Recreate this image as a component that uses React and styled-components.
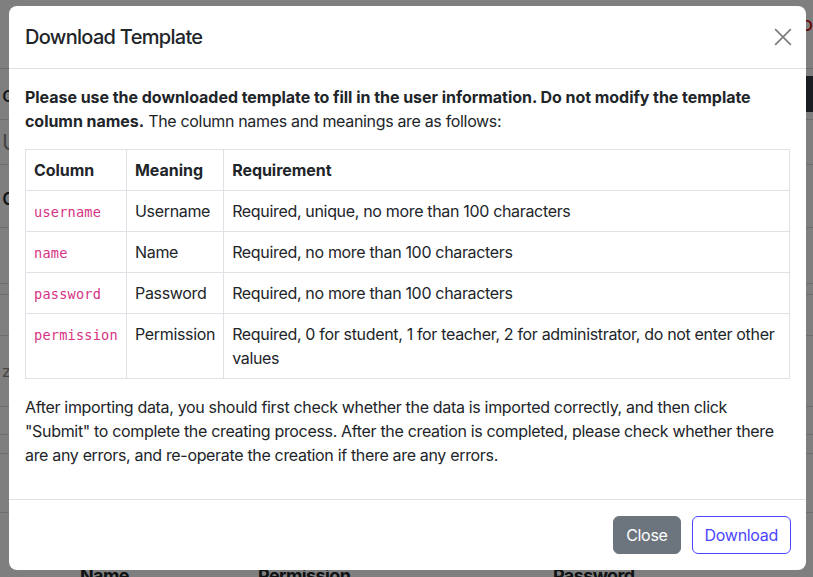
import React from "react";
import styled, { createGlobalStyle } from "styled-components";

const GlobalStyle = createGlobalStyle`
  html, body {
    margin: 0;
    padding: 0;
    height: 100%;
    overflow: hidden;
  }
  body {
    font-family: Inter, "Noto Sans", "Liberation Sans", sans-serif;
    color: #212529;
    background: #fff;
  }
`;

const Page = styled.div`
  position: relative;
  width: 813px;
  height: 577px;
  overflow: hidden;
  background: #fff;
`;

/* the page behind the modal, only a sliver shows at the edges */
const BehindTop = styled.div`
  display: flex;
  justify-content: flex-end;
  padding: 12px 0 0;
  height: 56px;
  border-bottom: 1px solid #ddd;
  color: #c00;
  font-size: 20px;
`;

const BehindRow = styled.div`
  display: flex;
  justify-content: space-between;
  align-items: center;
  height: ${({ h }) => h}px;
  border-bottom: 1px solid #ddd;
  padding: 0 2px;
  font-size: ${({ fs }) => fs || 16}px;
  color: ${({ faint }) => (faint ? "#888" : "#212529")};
`;

const DarkPill = styled.div`
  width: 60px;
  height: 36px;
  border-radius: 8px;
  background: #343a40;
  margin-right: -30px;
`;

const BehindHead = styled.div`
  display: grid;
  grid-template-columns: 80px 178px 295px 1fr;
  font-weight: 700;
  font-size: 18px;
  letter-spacing: -0.6px;
  padding-top: 52px;
  & > span:first-child {
    grid-column: 2;
  }
`;

const Backdrop = styled.div`
  position: absolute;
  inset: 0;
  background: rgba(0, 0, 0, 0.5);
`;

const Dialog = styled.div`
  position: absolute;
  top: 6px;
  left: 9px;
  width: 797px;
  background: #fff;
  border-radius: 8px;
  overflow: hidden;
`;

const Header = styled.div`
  display: flex;
  align-items: center;
  justify-content: space-between;
  padding: 16px;
  border-bottom: 1px solid #dee2e6;
`;

const Title = styled.h5`
  margin: 0;
  font-size: 20px;
  font-weight: 500;
  line-height: 30px;
  letter-spacing: -0.7px;
`;

const CloseX = styled.button`
  border: 0;
  background: transparent;
  padding: 0;
  width: 24px;
  height: 24px;
  display: flex;
  align-items: center;
  justify-content: center;
  margin-right: -5px;
  opacity: 0.5;
`;

const Body = styled.div`
  padding: 16px;
  font-size: 16px;
  line-height: 24px;
  letter-spacing: -0.33px;
  & strong {
    letter-spacing: -0.04px;
  }
`;

const Para = styled.p`
  margin: 0 0 16px;
`;

const Table = styled.table`
  width: 100%;
  border-collapse: collapse;
  margin-bottom: 16px;
  & th,
  & td {
    border: 1px solid #dee2e6;
    padding: 8px;
    text-align: left;
    vertical-align: top;
    line-height: 24px;
  }
  & th {
    font-weight: 700;
    letter-spacing: -0.04px;
  }
`;

const Code = styled.code`
  font-family: "DejaVu Sans Mono", "Liberation Mono", monospace;
  font-size: 13.6px;
  line-height: 1;
  color: #d63384;
  letter-spacing: 0.2px;
`;

const Footer = styled.div`
  display: flex;
  justify-content: flex-end;
  align-items: center;
  gap: 11px;
  padding: 16px 15px 16px;
  border-top: 1px solid #dee2e6;
`;

const Button = styled.button`
  font-family: inherit;
  font-size: 16px;
  line-height: 24px;
  letter-spacing: -0.3px;
  padding: 6px 12px;
  border-radius: 6px;
  border: 1px solid ${({ outline }) => (outline ? "#4a45ff" : "#6c757d")};
  background: ${({ outline }) => (outline ? "#fff" : "#6c757d")};
  color: ${({ outline }) => (outline ? "#4a45ff" : "#fff")};
`;

const rows = [
  ["username", "Username", "Required, unique, no more than 100 characters"],
  ["name", "Name", "Required, no more than 100 characters"],
  ["password", "Password", "Required, no more than 100 characters"],
  [
    "permission",
    "Permission",
    "Required, 0 for student, 1 for teacher, 2 for administrator, do not enter other values",
  ],
];

const App = () => {
  return (
    <Page>
      <GlobalStyle />
      <BehindTop>fo</BehindTop>
      <BehindRow h={50} fs={22}>
        <span>o</span>
        <DarkPill />
      </BehindRow>
      <BehindRow h={44} fs={22} faint>
        <span>U</span>
      </BehindRow>
      <BehindRow h={62} fs={24}>
        <span>d</span>
      </BehindRow>
      <BehindRow h={55} />
      <BehindRow h={10} />
      <BehindRow h={40} />
      <BehindRow h={70} faint>
        <span>zy</span>
      </BehindRow>
      <BehindRow h={27} />
      <BehindRow h={18} />
      <BehindRow h={58} />
      <BehindHead>
        <span>Name</span>
        <span>Permission</span>
        <span>Password</span>
      </BehindHead>
      <Backdrop />
      <Dialog>
        <Header>
          <Title>Download Template</Title>
          <CloseX aria-label="Close">
            <svg width="18" height="18" viewBox="0 0 16 16">
              <path
                d="M1 1 L15 15 M15 1 L1 15"
                stroke="#000"
                strokeWidth="1.5"
                fill="none"
              />
            </svg>
          </CloseX>
        </Header>
        <Body>
          <Para>
            <strong>
              Please use the downloaded template to fill in the user
              information. Do not modify the template column names.
            </strong>{" "}
            The column names and meanings are as follows:
          </Para>
          <Table>
            <thead>
              <tr>
                <th style={{ width: 84 }}>Column</th>
                <th style={{ width: 80 }}>Meaning</th>
                <th>Requirement</th>
              </tr>
            </thead>
            <tbody>
              {rows.map(([col, meaning, req]) => (
                <tr key={col}>
                  <td>
                    <Code>{col}</Code>
                  </td>
                  <td>{meaning}</td>
                  <td>{req}</td>
                </tr>
              ))}
            </tbody>
          </Table>
          <Para>
            After importing data, you should first check whether the data is
            imported correctly, and then click "Submit" to complete the
            creating process. After the creation is completed, please check
            whether there are any errors, and re-operate the creation if there
            are any errors.
          </Para>
        </Body>
        <Footer>
          <Button>Close</Button>
          <Button outline>Download</Button>
        </Footer>
      </Dialog>
    </Page>
  );
};

export default App;
